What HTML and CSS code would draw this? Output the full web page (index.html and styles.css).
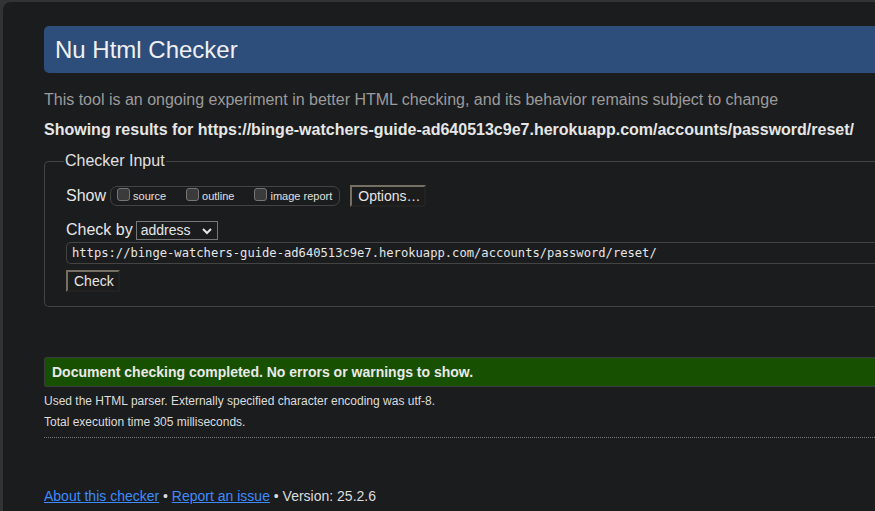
FILE: index.html
```html
<!DOCTYPE html>
<html>
<head>
<meta charset="utf-8">
<title>Nu Html Checker</title>
<link rel="stylesheet" href="styles.css">
</head>
<body>
<div class="panel">
  <h1 class="title">Nu Html Checker</h1>
  <p class="intro">This tool is an ongoing experiment in better HTML checking, and its behavior remains subject to change</p>
  <p class="showing">Showing results for https://binge-watchers-guide-ad640513c9e7.herokuapp.com/accounts/password/reset/</p>
  <fieldset class="input-box">
    <legend class="legend">Checker Input</legend>
    <div class="row show-row">
      <span class="label">Show</span>
      <span class="opts">
        <span class="opt"><span class="cb"></span>source</span>
        <span class="opt"><span class="cb"></span>outline</span>
        <span class="opt"><span class="cb"></span>image report</span>
      </span>
      <span class="btn btn-options">Options…</span>
    </div>
    <div class="row by-row">
      <span class="label">Check by</span>
      <span class="select">address
        <svg class="chev" width="12" height="8" viewBox="0 0 12 8"><path d="M2 2 L6 6 L10 2" fill="none" stroke="#e6e6e6" stroke-width="2"/></svg>
      </span>
    </div>
    <div class="url">https://binge-watchers-guide-ad640513c9e7.herokuapp.com/accounts/password/reset/</div>
    <div class="row"><span class="btn btn-check">Check</span></div>
  </fieldset>
  <div class="success">Document checking completed. No errors or warnings to show.</div>
  <p class="info first">Used the HTML parser. Externally specified character encoding was utf-8.</p>
  <p class="info">Total execution time 305 milliseconds.</p>
  <div class="dotted"></div>
  <p class="footer"><a href="#">About this checker</a> • <a href="#">Report an issue</a> • Version: 25.2.6</p>
</div>
</body>
</html>
```
FILE: styles.css
```css
html, body {
  margin: 0;
  padding: 0;
  background: #333333;
  height: 100%;
  overflow: hidden;
}
.panel {
  margin: 2px 0 0 3px;
  background: #1b1c1e;
  border-top-left-radius: 8px;
  padding: 24px 0 0 41px;
  height: 600px;
  font-family: "Liberation Sans", Arial, sans-serif;
  color: #e0e0e0;
}
.title {
  margin: 0;
  height: 47px;
  line-height: 47px;
  background: #2d4d7b;
  border-radius: 5px 0 0 5px;
  font-size: 24px;
  font-weight: normal;
  color: #f0f0f0;
  padding-left: 11px;
}
.intro {
  margin: 17px 0 0;
  font-size: 16px;
  line-height: 20px;
  color: #9b9b9b;
  white-space: nowrap;
}
.showing {
  margin: 10px 0 0;
  font-size: 16px;
  line-height: 20px;
  font-weight: bold;
  color: #e6e6e6;
  white-space: nowrap;
}
.input-box {
  margin: 11px 0 0;
  border: 1px solid #444;
  border-right: none;
  border-radius: 5px 0 0 5px;
  padding: 10px 0 14px 21px;
}
.legend {
  font-size: 16px;
  padding: 0 1px;
  margin-left: -2px;
  color: #e0e0e0;
  line-height: 20px;
}
.row {
  display: flex;
  align-items: center;
}
.label {
  font-size: 16px;
  color: #e6e6e6;
  margin-right: 4px;
}
.opts {
  display: flex;
  align-items: center;
  border: 1px solid #444;
  border-radius: 7px;
  height: 18px;
  padding: 0 7px 0 6px;
  font-size: 11px;
  margin-right: 10px;
  color: #e0e0e0;
}
.opt {
  display: flex;
  align-items: center;
  margin-right: 20px;
}
.opt:last-child { margin-right: 0; }
.cb {
  width: 11px;
  height: 11px;
  border: 1px solid #767676;
  background: #3b3b3b;
  border-radius: 3px;
  margin-right: 3px;
  margin-top: -3px;
}
.btn {
  display: inline-block;
  font-size: 14px;
  line-height: 16px;
  color: #e6e6e6;
  background: #1c1c1c;
  padding: 1px 6px 1px 6px;
  border-style: solid;
  border-width: 2px;
  border-color: #767064 #222 #222 #767064;
}
.btn-options { padding-right: 3px; }
.btn-check { padding-right: 4px; }
.show-row { height: 22px; margin-top: 4px; }
.by-row { margin-top: 13px; height: 20px; }
.select {
  display: flex;
  align-items: center;
  justify-content: space-between;
  width: 72px;
  height: 17px;
  border: 1px solid #777;
  font-size: 14px;
  padding: 0 4px;
  margin-left: -1px;
  color: #e6e6e6;
}
.chev { margin-top: 1px; }
.url {
  margin-top: 2px;
  height: 20px;
  line-height: 20px;
  border: 1px solid #444;
  border-right: none;
  border-radius: 5px 0 0 5px;
  padding-left: 5px;
  font-family: "DejaVu Sans Mono", monospace;
  font-size: 12.15px;
  color: #e6e6e6;
  white-space: nowrap;
  margin-bottom: 6px;
}
.success {
  margin-top: 50px;
  height: 28px;
  line-height: 28px;
  background: #175000;
  border: 1px solid #3c3c3c;
  border-right: none;
  border-radius: 3px 0 0 3px;
  padding-left: 7px;
  font-size: 14px;
  font-weight: bold;
  color: #eaeaea;
}
.info {
  margin: 0;
  font-size: 12px;
  line-height: 21px;
  color: #dcdcdc;
}
.info.first { margin-top: 4px; }
.dotted {
  margin-top: 4px;
  border-top: 1px dotted #777;
}
.footer {
  margin: 50px 0 0;
  font-size: 14px;
  color: #dcdcdc;
}
.footer a {
  color: #3d8bfd;
  text-decoration: underline;
}
```
